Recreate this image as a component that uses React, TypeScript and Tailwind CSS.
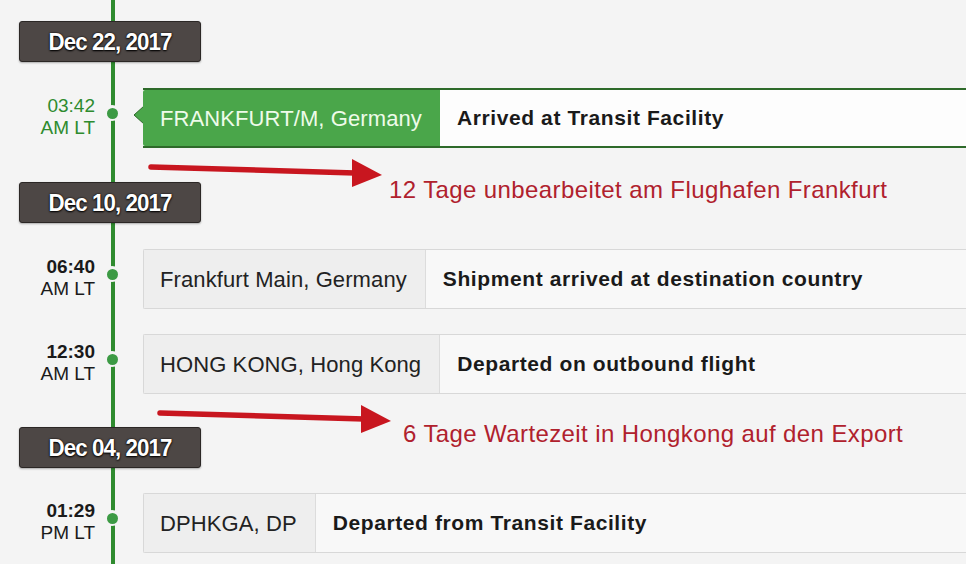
const events = [
  {
    date: "Dec 22, 2017",
    items: [
      {
        time: "03:42",
        zone: "AM LT",
        place: "FRANKFURT/M, Germany",
        status: "Arrived at Transit Facility",
        active: true,
      },
    ],
    note: "12 Tage unbearbeitet am Flughafen Frankfurt",
  },
  {
    date: "Dec 10, 2017",
    items: [
      {
        time: "06:40",
        zone: "AM LT",
        place: "Frankfurt Main, Germany",
        status: "Shipment arrived at destination country",
      },
      {
        time: "12:30",
        zone: "AM LT",
        place: "HONG KONG, Hong Kong",
        status: "Departed on outbound flight",
      },
    ],
    note: "6 Tage Wartezeit in Hongkong auf den Export",
  },
  {
    date: "Dec 04, 2017",
    items: [
      {
        time: "01:29",
        zone: "PM LT",
        place: "DPHKGA, DP",
        status: "Departed from Transit Facility",
      },
    ],
  },
];

type Item = {
  time: string;
  zone: string;
  place: string;
  status: string;
  active?: boolean;
};

function DateBadge({ text }: { text: string }) {
  return (
    <div className="ml-[19px] w-[182px] h-[41px] flex items-center justify-center rounded-[3px] border border-[#2b2725] bg-[#4d4745] shadow-[0_1px_2px_rgba(0,0,0,0.3)]">
      <span className="text-white text-[24px] font-bold tracking-[-1px] scale-x-[0.93] [text-shadow:_0_1px_2px_#000,_0_0_2px_#000] font-['Liberation_Sans_Narrow','Liberation_Sans',sans-serif]">
        {text}
      </span>
    </div>
  );
}

function Row({ item }: { item: Item }) {
  return (
    <div className="flex h-[60px]">
      {/* TIME */}
      <div
        className={`w-[96px] pt-[7px] pr-[1px] text-right text-[19px] leading-[22px] ${
          item.active ? "text-[#2e8b2e]" : "text-[#1a1a1a]"
        }`}
      >
        <div className={item.active ? "" : "font-bold"}>{item.time}</div>
        <div>{item.zone}</div>
      </div>

      {/* DOT */}
      <div className="w-[47px]">
        <div className="ml-[8px] mt-[17px] w-[16px] h-[16px] rounded-full bg-[#f4f4f4] flex items-center justify-center">
          <div className="w-[11px] h-[11px] rounded-full bg-[#3c9a44]" />
        </div>
      </div>

      {/* CARD */}
      {item.active ? (
        <div className="relative flex flex-1 border-y-2 border-[#2e6a2a] bg-[#fdfdfd]">
          <svg
            className="absolute left-[-10px] top-[15px]"
            width="12"
            height="20"
            viewBox="0 0 12 20"
          >
            <polygon points="11,1 1,10 11,19" fill="#4aa64a" stroke="#2e6a2a" strokeWidth="1" />
            <rect x="10" y="0" width="2" height="20" fill="#4aa64a" />
          </svg>
          <div className="flex items-center bg-[#4aa64a] pl-[17px] pr-[18px] text-[22px] tracking-[0.1px] text-[#eefbe9] rounded-l-[2px]">
            {item.place}
          </div>
          <div className="flex items-center pl-[17px] text-[21px] font-bold tracking-[0.6px] text-[#1a1a1a]">
            {item.status}
          </div>
        </div>
      ) : (
        <div className="flex flex-1 border border-r-0 border-[#d8d8d8] bg-[#f8f8f8] rounded-l-[2px]">
          <div className="flex items-center bg-[#eeeeee] border-r border-[#dcdcdc] pl-[16px] pr-[18px] text-[22px] tracking-[0.1px] text-[#222]">
            {item.place}
          </div>
          <div className="flex items-center pl-[17px] text-[21px] font-bold tracking-[0.6px] text-[#1a1a1a]">
            {item.status}
          </div>
        </div>
      )}
    </div>
  );
}

function Note({
  text,
  x,
  w,
  gap,
  top,
}: {
  text: string;
  x: number;
  w: number;
  gap: number;
  top: number;
}) {
  // annotation drawn over the screenshot: red arrow + text
  return (
    <div className="relative h-0">
      <svg
        className="absolute top-[8px]"
        style={{ left: x }}
        width={w + 40}
        height="36"
        viewBox={`0 0 ${w + 40} 36`}
      >
        <line
          x1="3"
          y1="11"
          x2={w - 26}
          y2="17"
          stroke="#c8161f"
          strokeWidth="5.5"
          strokeLinecap="round"
        />
        <polygon
          points={`${w - 29},3 ${w + 1},19 ${w - 29},31`}
          fill="#c8161f"
        />
      </svg>
      <div
        className="absolute whitespace-nowrap text-[24px] leading-[26px] tracking-[0.4px] text-[#b0212d]"
        style={{ left: x + w + gap, top }}
      >
        {text}
      </div>
    </div>
  );
}

export default function App() {
  return (
    <div className="relative w-[966px] h-[564px] overflow-hidden bg-[#f4f4f4] font-['Liberation_Sans',Arial,sans-serif]">
      {/* TIMELINE LINE */}
      <div className="absolute left-[111px] top-0 bottom-0 w-[4px] bg-[#2f8b2f]" />

      <div className="relative flex flex-col pt-[21px]">
        <DateBadge text={events[0].date} />
        <div className="mt-[26px]">
          <Row item={events[0].items[0]} />
        </div>
        <Note text={events[0].note!} x={148} w={233} gap={8} top={29} />

        <div className="mt-[34px]">
          <DateBadge text={events[1].date} />
        </div>
        <div className="mt-[26px]">
          <Row item={events[1].items[0]} />
        </div>
        <div className="mt-[25px]">
          <Row item={events[1].items[1]} />
        </div>
        <Note text={events[1].note!} x={157} w={233} gap={13} top={27} />

        <div className="mt-[33px]">
          <DateBadge text={events[2].date} />
        </div>
        <div className="mt-[25px]">
          <Row item={events[2].items[0]} />
        </div>
      </div>
    </div>
  );
}
